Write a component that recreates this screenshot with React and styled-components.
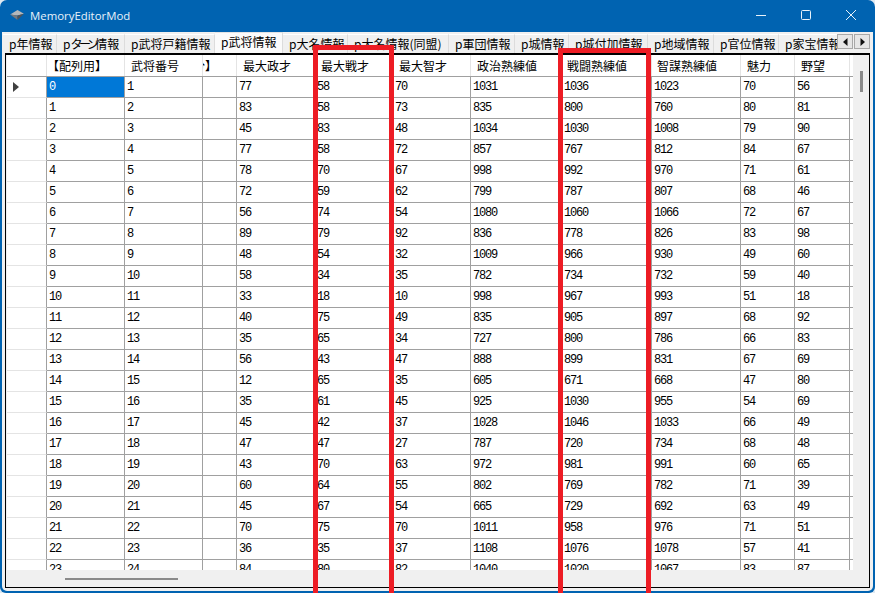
import React from "react";
import styled, { createGlobalStyle } from "styled-components";

const tabs = [
  { label: "年情報", width: 54 },
  { kana: "ターン", label: "情報", width: 68 },
  { label: "武将戸籍情報", width: 90 },
  { label: "武将情報", width: 68, active: true },
  { label: "大名情報", width: 65 },
  { label: "大名情報(同盟)", width: 101 },
  { label: "軍団情報", width: 66 },
  { label: "城情報", width: 54 },
  { label: "城付加情報", width: 79 },
  { label: "地域情報", width: 66 },
  { label: "官位情報", width: 65 },
  { label: "家宝情報", width: 66 },
];

const columns = "40px 78px 78px 34px 78px 78px 78px 91px 90px 89px 54px 55px 3px";

const headers = [
  { label: "" },
  { label: "【配列用】", pad: 0 },
  { label: "武将番号", pad: 6 },
  { label: "身分】", clipped: true },
  { label: "最大政才", pad: 6 },
  { label: "最大戦才", pad: 6 },
  { label: "最大智才", pad: 6 },
  { label: "政治熟練値", pad: 6 },
  { label: "戦闘熟練値", pad: 5 },
  { label: "智謀熟練値", pad: 5 },
  { label: "魅力", pad: 6 },
  { label: "野望", pad: 6 },
];

const rows = [
  [77, 58, 70, 1031, 1036, 1023, 70, 56],
  [83, 58, 73, 835, 800, 760, 80, 81],
  [45, 83, 48, 1034, 1030, 1008, 79, 90],
  [77, 58, 72, 857, 767, 812, 84, 67],
  [78, 70, 67, 998, 992, 970, 71, 61],
  [72, 59, 62, 799, 787, 807, 68, 46],
  [56, 74, 54, 1080, 1060, 1066, 72, 67],
  [89, 79, 92, 836, 778, 826, 83, 98],
  [48, 54, 32, 1009, 966, 930, 49, 60],
  [58, 34, 35, 782, 734, 732, 59, 40],
  [33, 18, 10, 998, 967, 993, 51, 18],
  [40, 75, 49, 835, 905, 897, 68, 92],
  [35, 65, 34, 727, 800, 786, 66, 83],
  [56, 43, 47, 888, 899, 831, 67, 69],
  [12, 65, 35, 605, 671, 668, 47, 80],
  [35, 61, 45, 925, 1030, 955, 54, 69],
  [45, 42, 37, 1028, 1046, 1033, 66, 49],
  [47, 47, 27, 787, 720, 734, 68, 48],
  [43, 70, 63, 972, 981, 991, 60, 65],
  [60, 64, 55, 802, 769, 782, 71, 39],
  [45, 67, 54, 665, 729, 692, 63, 49],
  [70, 75, 70, 1011, 958, 976, 71, 51],
  [36, 35, 37, 1108, 1076, 1078, 57, 41],
  [84, 80, 82, 1040, 1020, 1067, 83, 87],
];

const App = () => {
  return (
    <>
      <GlobalStyle />
      <Window>
        <TitleBar>
          <AppIcon viewBox="0 0 16 12">
            <path d="M0 5 L8 0 L15 4 L8 6z" fill="#b4b7ba" />
            <path d="M0 5 L8 6 L8 11z" fill="#77797c" />
            <path d="M8 6 L15 4 L8 11z" fill="#515356" />
          </AppIcon>
          <Title>MemoryEditorMod</Title>
          <WindowButtons>
            <WindowButton viewBox="0 0 10 10">
              <path d="M0 5.5H10" />
            </WindowButton>
            <WindowButton viewBox="0 0 10 10">
              <rect x="0.5" y="0.5" width="9" height="9" rx="1" />
            </WindowButton>
            <WindowButton viewBox="0 0 10 10">
              <path d="M0 0L10 10M10 0L0 10" />
            </WindowButton>
          </WindowButtons>
        </TitleBar>
        <Client>
          <TabStrip>
            <TabList>
              {tabs.map((tab, i) => (
                <Tab key={i} $width={tab.width} $active={tab.active}>
                  <span>
                    p{tab.kana && <Kana>{tab.kana}</Kana>}
                    {tab.label}
                  </span>
                </Tab>
              ))}
            </TabList>
            <TabArrows>
              <TabArrow>
                <svg width="5" height="8" viewBox="0 0 5 8">
                  <path d="M4.5 0V8L0 4z" fill="#111" />
                </svg>
              </TabArrow>
              <TabArrow>
                <svg width="5" height="8" viewBox="0 0 5 8">
                  <path d="M0.5 0V8L5 4z" fill="#111" />
                </svg>
              </TabArrow>
            </TabArrows>
          </TabStrip>
          <GridFrame>
            <GridMain>
              <Grid>
                <HeaderRow>
                  {headers.map((header, i) => (
                    <HeaderCell
                      key={i}
                      $pad={header.pad}
                      $clipped={header.clipped}
                    >
                      {header.label}
                    </HeaderCell>
                  ))}
                  <HeaderCell />
                </HeaderRow>
                {rows.map((row, i) => (
                  <Row key={i}>
                    <RowHead>
                      {i === 0 && (
                        <svg width="6" height="10" viewBox="0 0 6 10">
                          <path d="M0 0L6 5L0 10z" fill="#404040" />
                        </svg>
                      )}
                    </RowHead>
                    <Cell $selected={i === 0}>{i}</Cell>
                    <Cell>{i + 1}</Cell>
                    <Cell />
                    {row.map((value, j) => (
                      <Cell key={j}>{value}</Cell>
                    ))}
                    <RowEnd />
                  </Row>
                ))}
              </Grid>
              <VScroll>
                <VThumb />
              </VScroll>
            </GridMain>
            <HScroll>
              <HThumb />
            </HScroll>
          </GridFrame>
        </Client>
        <RedFrame $left={313} $top={45} $width={81} />
        <RedFrame $left={558} $top={48} $width={93} />
      </Window>
    </>
  );
};

const GlobalStyle = createGlobalStyle`
  html, body {
    margin: 0;
    height: 100%;
    overflow: hidden;
    background: #dfe9f1;
  }
`;

const Window = styled.div`
  position: relative;
  width: 875px;
  height: 593px;
  box-sizing: border-box;
  padding: 0 2px 2px;
  display: flex;
  flex-direction: column;
  background: #0063b1;
  border-radius: 7px 7px 6px 6px;
  overflow: hidden;
  font-family: "Noto Sans CJK JP", "Liberation Sans", sans-serif;
  font-size: 12px;
  color: #000;
`;

const TitleBar = styled.div`
  height: 32px;
  box-sizing: border-box;
  padding: 0 0 2px 8px;
  flex: none;
  display: flex;
  align-items: center;
  color: #e8f2fa;
`;

const AppIcon = styled.svg`
  width: 15px;
  height: 11px;
  margin-right: 5px;
`;

const Title = styled.span`
  font-family: "Open Sans", "Liberation Sans", sans-serif;
  font-size: 11.4px;
`;

const WindowButtons = styled.div`
  margin-left: auto;
  display: flex;
  align-items: center;
  gap: 35px;
  padding-right: 17px;
`;

const WindowButton = styled.svg`
  width: 10px;
  height: 10px;
  fill: none;
  stroke: #e8f2fa;
  stroke-width: 1;
`;

const Client = styled.div`
  flex: 1;
  min-height: 0;
  display: flex;
  flex-direction: column;
  background: #f0f0f0;
  border-radius: 0 0 5px 5px;
  padding: 0 3px 3px;
`;

const TabStrip = styled.div`
  height: 21px;
  flex: none;
  display: flex;
  margin: 0 0 0 -2px;
`;

const TabList = styled.div`
  width: 837px;
  display: flex;
  align-items: flex-end;
  overflow: hidden;
`;

const Tab = styled.div`
  flex: none;
  box-sizing: border-box;
  width: ${(p) => p.$width}px;
  height: ${(p) => (p.$active ? 21 : 19)}px;
  padding: ${(p) => (p.$active ? "0 0 3px 6px" : "0 0 0 6px")};
  display: flex;
  align-items: center;
  white-space: nowrap;
  overflow: hidden;
  background: ${(p) => (p.$active ? "#fbfbfb" : "#f0f0f0")};
  border-top: 1px solid ${(p) => (p.$active ? "#e4e4e4" : "#ffffff")};
  border-right: 1px solid #dcdcdc;
  line-height: 16px;
`;

const Kana = styled.span`
  letter-spacing: -3.5px;
`;

const TabArrows = styled.div`
  display: flex;
  gap: 1px;
  padding-top: 2px;
`;

const TabArrow = styled.div`
  width: 16px;
  height: 15px;
  box-sizing: border-box;
  display: flex;
  align-items: center;
  justify-content: center;
  background: #e6e6e6;
  border: 1px solid #a8a8a8;
`;

const GridFrame = styled.div`
  flex: 1;
  min-height: 0;
  display: flex;
  flex-direction: column;
  border: 1px solid #000;
  border-top-width: 2px;
  background: #f0f0f0;
`;

const GridMain = styled.div`
  flex: 1;
  min-height: 0;
  display: flex;
`;

const Grid = styled.div`
  width: 846px;
  margin-left: 1px;
  background: #fff;
  overflow: hidden;
`;

const HeaderRow = styled.div`
  display: grid;
  grid-template-columns: ${columns};
  height: 21px;
  border-bottom: 1px solid #a0a0a0;
`;

const HeaderCell = styled.div`
  display: flex;
  align-items: center;
  justify-content: ${(p) => (p.$clipped ? "flex-end" : "flex-start")};
  box-sizing: border-box;
  padding-left: ${(p) => p.$pad ?? 0}px;
  padding-right: ${(p) => (p.$clipped ? 19 : 0)}px;
  border-right: 1px solid #e4e4e4;
  overflow: hidden;
  white-space: nowrap;
  &:last-child {
    border-right: none;
  }
`;

const Row = styled.div`
  display: grid;
  grid-template-columns: ${columns};
  height: 21px;
  box-sizing: border-box;
`;

const RowHead = styled.div`
  display: flex;
  align-items: center;
  padding-left: 6px;
  background: #fff;
  border-right: 1px solid #a0a0a0;
  border-bottom: 1px solid #e4e4e4;
`;

const Cell = styled.div`
  display: flex;
  align-items: center;
  box-sizing: border-box;
  padding-left: 2px;
  font-family: "Liberation Mono", monospace;
  font-size: 12px;
  letter-spacing: -1.2px;
  background: ${(p) => (p.$selected ? "#0078d7" : "#fff")};
  color: ${(p) => (p.$selected ? "#fff" : "#000")};
  border-right: 1px solid #a0a0a0;
  border-bottom: 1px solid #a0a0a0;
`;

const RowEnd = styled.div`
  border-bottom: 1px solid #a0a0a0;
`;

const VScroll = styled.div`
  flex: 1;
  display: flex;
  justify-content: center;
  padding-top: 16px;
`;

const VThumb = styled.div`
  width: 3px;
  height: 21px;
  background: #8a8a8a;
`;

const HScroll = styled.div`
  height: 17px;
  flex: none;
  display: flex;
  align-items: center;
  padding-left: 59px;
`;

const HThumb = styled.div`
  width: 113px;
  height: 2px;
  background: #8a8a8a;
`;

const RedFrame = styled.div`
  position: absolute;
  left: ${(p) => p.$left}px;
  top: ${(p) => p.$top}px;
  width: ${(p) => p.$width}px;
  height: 600px;
  box-sizing: border-box;
  border: 5px solid #ed1c24;
  border-bottom: none;
`;

export default App;
